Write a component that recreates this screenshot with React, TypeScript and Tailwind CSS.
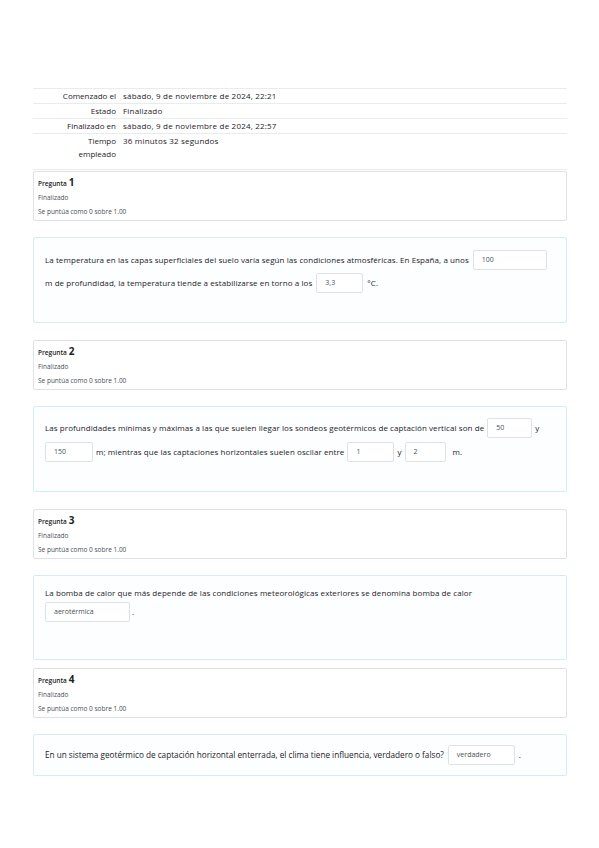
import React from "react";

const font = { fontFamily: '"Open Sans", "Noto Sans", sans-serif' };

function Blank({ value, w }: { value: string; w: string }) {
  return (
    <span
      className={`inline-flex h-[20px] items-center rounded-[2px] border border-[#dee2e6] bg-white px-[8px] align-middle text-[7px] font-normal tracking-normal text-[#495057] ${w}`}
    >
      {value}
    </span>
  );
}

function Info({ n }: { n: number }) {
  return (
    <div className="flex h-[50px] flex-col justify-center gap-[6px] rounded-[2px] border border-[#dee2e6] bg-white px-[4px] pt-[1px]">
      <div className="flex items-baseline gap-[2px] text-[6.5px] font-semibold leading-[8px] text-[#1d2125]">
        Pregunta <span className="text-[10px] font-bold leading-[8px]">{n}</span>
      </div>
      <div className="text-[6.5px] leading-[8px] text-[#495057]">Finalizado</div>
      <div className="text-[6.5px] leading-[8px] text-[#495057]">Se puntúa como 0 sobre 1.00</div>
    </div>
  );
}

function Formulation({ h, children }: { h: string; children: React.ReactNode }) {
  return (
    <div className={`rounded-[2px] border border-[#d5ecf3] bg-[#fcfeff] px-[11px] text-[8px] tracking-[0.08px] text-[#1d2125] ${h}`}>
      {children}
    </div>
  );
}

export default function App() {
  const rows: [string, string][] = [
    ["Comenzado el", "sábado, 9 de noviembre de 2024, 22:21"],
    ["Estado", "Finalizado"],
    ["Finalizado en", "sábado, 9 de noviembre de 2024, 22:57"],
  ];

  return (
    <div className="min-h-[848px] bg-white" style={font}>
      <div className="ml-[33px] w-[534px] pt-[88px]">
        <table className="w-full border-collapse text-[8px] text-[#1d2125]">
          <tbody>
            {rows.map(([k, v]) => (
              <tr key={k} className="border-t border-[#e9ecef]">
                <th className="h-[15px] w-[90px] pr-[7px] pb-[1px] text-right font-normal">{k}</th>
                <td className="h-[15px] pb-[1px] tracking-[0.2px]">{v}</td>
              </tr>
            ))}
            <tr className="border-y border-[#e9ecef]">
              <th className="h-[36px] w-[90px] pr-[7px] text-right align-top font-normal leading-[13px]">
                Tiempo
                <br />
                empleado
              </th>
              <td className="align-top leading-[13px] tracking-[0.2px]">36 minutos 32 segundos</td>
            </tr>
          </tbody>
        </table>

        <div className="mt-[1px]">
          <Info n={1} />
        </div>
        <div className="mt-[16px]">
          <Formulation h="h-[86px] pt-[12px]">
            <div className="flex items-center gap-[4px]">
              La temperatura en las capas superficiales del suelo varía según las condiciones atmosféricas. En España, a unos
              <Blank value="100" w="w-[74px]" />
            </div>
            <div className="mt-[3px] flex items-center gap-[4px]">
              m de profundidad, la temperatura tiende a estabilizarse en torno a los
              <Blank value="3,3" w="w-[47px]" />
              <span>°C.</span>
            </div>
          </Formulation>
        </div>

        <div className="mt-[17px]">
          <Info n={2} />
        </div>
        <div className="mt-[16px]">
          <Formulation h="h-[86px] pt-[11px]">
            <div className="flex items-center gap-[3px]">
              Las profundidades mínimas y máximas a las que suelen llegar los sondeos geotérmicos de captación vertical son de
              <Blank value="50" w="w-[45px]" />
              <span>y</span>
            </div>
            <div className="mt-[4px] flex items-center gap-[3px]">
              <Blank value="150" w="w-[48px]" />
              m; mientras que las captaciones horizontales suelen oscilar entre
              <Blank value="1" w="w-[47px]" />
              <span>y</span>
              <Blank value="2" w="w-[41px]" />
              <span className="ml-[4px]">m.</span>
            </div>
          </Formulation>
        </div>

        <div className="mt-[17px]">
          <Info n={3} />
        </div>
        <div className="mt-[16px]">
          <Formulation h="h-[85px] pt-[11px]">
            <div>La bomba de calor que más depende de las condiciones meteorológicas exteriores se denomina bomba de calor</div>
            <div className="mt-[3px] flex items-center gap-[2px]">
              <Blank value="aerotérmica" w="w-[85px]" />
              <span>.</span>
            </div>
          </Formulation>
        </div>

        <div className="mt-[8px]">
          <Info n={4} />
        </div>
        <div className="mt-[16px]">
          <Formulation h="h-[42px]">
            <div className="flex h-full items-center gap-[4px] text-[8.2px] font-medium tracking-normal">
              En un sistema geotérmico de captación horizontal enterrada, el clima tiene influencia, verdadero o falso?
              <Blank value="verdadero" w="w-[67px]" />
              <span>.</span>
            </div>
          </Formulation>
        </div>
      </div>
    </div>
  );
}
